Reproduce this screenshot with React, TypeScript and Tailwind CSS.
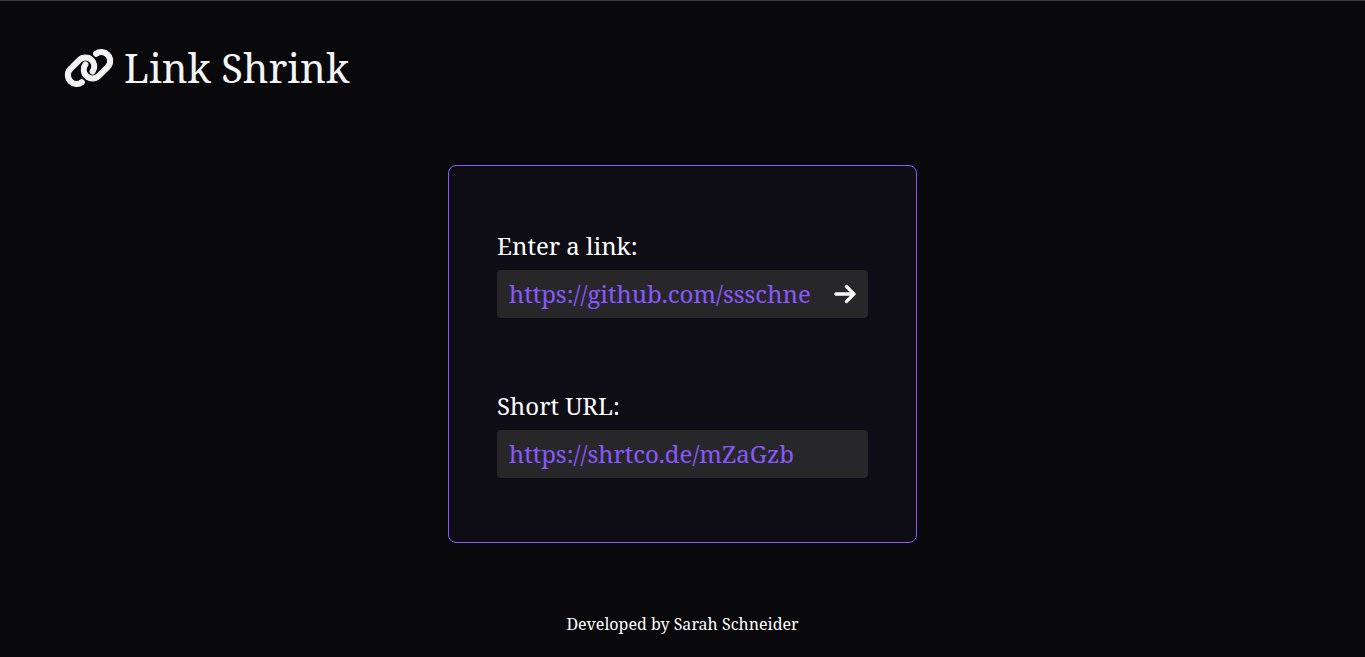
import { useState } from 'react';
import { FaLink } from 'react-icons/fa6';

const fieldClass =
  'h-12 w-full min-w-0 bg-transparent px-3 pb-0.5 text-2xl text-[#8a57ff] outline-none';

function ArrowIcon() {
  return (
    <svg viewBox="0 0 448 512" className="h-6 w-[22px] fill-current stroke-current" strokeWidth="10" aria-hidden="true">
      <path d="M438.6 278.6l-160 160C272.4 444.9 264.2 448 256 448s-16.38-3.125-22.62-9.375c-12.5-12.5-12.5-32.75 0-45.25L338.8 288H32C14.33 288 0 273.7 0 256S14.33 224 32 224h306.8l-105.4-105.4c-12.5-12.5-12.5-32.75 0-45.25s32.75-12.5 45.25 0l160 160C451.1 245.9 451.1 266.1 438.6 278.6z" />
    </svg>
  );
}

export default function App() {
  const [link, setLink] = useState('https://github.com/ssschneider');
  return (
    <div className="flex min-h-screen flex-col border-t border-[#3a3a3c] bg-[#09090b] font-['Roboto_Slab','Noto_Serif','DejaVu_Serif','Liberation_Serif',serif] text-white">
      <header className="flex items-center gap-2.5 px-16 pt-[35px] text-[#f4f4f5]">
        <FaLink className="h-10 w-[50px] stroke-current stroke-[14px]" aria-hidden="true" />
        <h1 className="text-[40px] leading-16">Link Shrink</h1>
      </header>
      <main className="mt-[65px] flex justify-center px-4">
        <form
          className="flex w-full max-w-[469px] flex-col gap-18 rounded-lg border border-[#8a57ff] bg-[#0e0c14] px-12 py-16"
          onSubmit={(event) => event.preventDefault()}
        >
          <div className="flex flex-col gap-2">
            <label htmlFor="link" className="text-2xl">Enter a link:</label>
            <div className="flex rounded-sm bg-[#27272a]">
              <input id="link" className={fieldClass} value={link} onChange={(e) => setLink(e.target.value)} />
              <button type="submit" aria-label="Shorten" className="px-3">
                <ArrowIcon />
              </button>
            </div>
          </div>
          <div className="flex flex-col gap-2">
            <label htmlFor="short" className="text-2xl">Short URL:</label>
            <div className="flex rounded-sm bg-[#27272a]">
              <input id="short" className={fieldClass} value="https://shrtco.de/mZaGzb" readOnly />
            </div>
          </div>
        </form>
      </main>
      <footer className="mt-auto pb-[21px] text-center">Developed by Sarah Schneider</footer>
    </div>
  );
}
